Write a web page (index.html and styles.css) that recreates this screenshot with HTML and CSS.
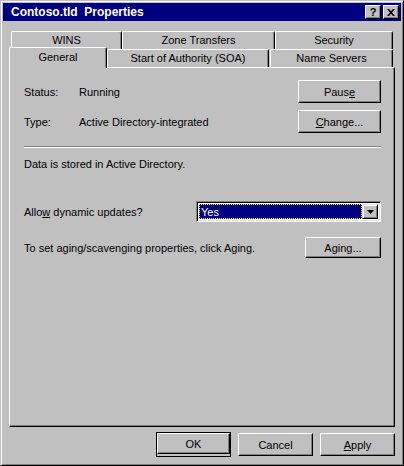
FILE: index.html
```html
<!DOCTYPE html>
<html>
<head>
<meta charset="utf-8">
<link rel="stylesheet" href="styles.css">
</head>
<body>
<div class="window">
  <div class="titlebar">
    <span class="title">Contoso.tld&nbsp; Properties</span>
    <div class="tbtns">
      <div class="tbtn">?</div>
      <div class="tbtn">
        <svg width="8" height="7" viewBox="0 0 8 7"><path d="M0 0h2l2 2.2L6 0h2L5 3.5 8 7H6L4 4.8 2 7H0l3-3.5z" fill="#000"/></svg>
      </div>
    </div>
  </div>
  <div class="client">
    <div class="tabs">
      <div class="row row1">
        <div class="tab t-wins">WINS</div>
        <div class="tab t-zone">Zone Transfers</div>
        <div class="tab t-sec">Security</div>
      </div>
      <div class="row row2">
        <div class="tab sel t-gen">General</div>
        <div class="tab t-soa">Start of Authority (SOA)</div>
        <div class="tab t-ns">Name Servers</div>
      </div>
    </div>
    <div class="panel">
      <div class="line r-status">
        <span class="lbl">Status:</span><span class="val">Running</span>
        <div class="btn b-wide">Paus<u>e</u></div>
      </div>
      <div class="line r-type">
        <span class="lbl">Type:</span><span class="val">Active Directory-integrated</span>
        <div class="btn b-wide"><u>C</u>hange...</div>
      </div>
      <div class="sep"></div>
      <div class="info">Data is stored in Active Directory.</div>
      <div class="line r-allow">
        <span class="grow">Allo<u>w</u> dynamic updates?</span>
        <div class="combo">
          <div class="field"><span class="focus">Yes</span></div>
          <div class="arrow"><svg width="7" height="4" viewBox="0 0 7 4"><path d="M0 0h7L3.5 4z" fill="#000"/></svg></div>
        </div>
      </div>
      <div class="line r-aging">
        <span class="grow">To set aging/scavenging properties, click Aging.</span>
        <div class="btn b-aging">Aging...</div>
      </div>
    </div>
    <div class="footer">
      <div class="default"><div class="btn b-foot">OK</div></div>
      <div class="btn b-foot">Cancel</div>
      <div class="btn b-foot"><u>A</u>pply</div>
    </div>
  </div>
</div>
</body>
</html>
```
FILE: styles.css
```css
html, body {
  margin: 0;
  padding: 0;
  background: #c0c0c0;
}
body {
  font-family: "Liberation Sans", Arial, sans-serif;
  font-size: 11px;
  color: #000;
}
.window {
  width: 404px;
  height: 466px;
  box-sizing: border-box;
  background: #c0c0c0;
  border-top: 1px solid #c0c0c0;
  border-left: 1px solid #c0c0c0;
  border-right: 1px solid #000;
  border-bottom: 1px solid #000;
  box-shadow: inset 1px 1px #fff, inset -1px -1px #808080;
  padding: 2px;
  display: flex;
  flex-direction: column;
}
.titlebar {
  height: 18px;
  background: #000080;
  display: flex;
  align-items: center;
  justify-content: space-between;
  padding: 0 2px 0 8px;
  flex-shrink: 0;
}
.title {
  color: #fff;
  font-weight: bold;
  font-size: 12px;
  white-space: pre;
}
.tbtns {
  display: flex;
  gap: 2px;
}
.tbtn {
  width: 16px;
  height: 14px;
  box-sizing: border-box;
  background: #c0c0c0;
  border-top: 1px solid #fff;
  border-left: 1px solid #fff;
  border-right: 1px solid #000;
  border-bottom: 1px solid #000;
  box-shadow: inset -1px -1px #808080;
  display: flex;
  align-items: center;
  justify-content: center;
  font-weight: bold;
  font-size: 11px;
  line-height: 12px;
}
.client {
  padding: 10px 6px 0 6px;
  display: flex;
  flex-direction: column;
}
.tabs {
  display: flex;
  flex-direction: column;
}
.row {
  display: flex;
}
.row1 {
  height: 18px;
  margin-left: 2px;
}
.row2 {
  height: 20px;
  margin-top: -2px;
  align-items: flex-end;
  position: relative;
}
.tab {
  box-sizing: border-box;
  background: #c0c0c0;
  border-top: 1px solid #fff;
  border-left: 1px solid #fff;
  border-right: 1px solid #000;
  border-radius: 2px 2px 0 0;
  box-shadow: inset -1px 0 #808080;
  display: flex;
  align-items: center;
  justify-content: center;
  padding-bottom: 1px;
}
.row1 .tab { height: 18px; }
.row2 .tab { height: 18px; }
.t-wins { width: 111px; }
.t-zone { width: 153px; }
.t-sec { width: 118px; }
.t-gen {
  width: 98px;
  z-index: 2;
}
.row2 .tab.sel {
  height: 21px;
  margin-bottom: -1px;
  padding-bottom: 3px;
}
.t-soa { width: 162px; margin-left: 0; }
.t-ns { width: 123px; margin-left: 1px; }
.panel {
  width: 386px;
  height: 360px;
  box-sizing: border-box;
  border-top: 1px solid #fff;
  border-left: 1px solid #fff;
  border-right: 1px solid #000;
  border-bottom: 1px solid #000;
  box-shadow: inset -1px -1px #808080;
  padding: 12px 13px 0 14px;
  display: flex;
  flex-direction: column;
}
.line {
  display: flex;
  align-items: center;
}
.lbl { width: 55px; }
.val { flex: 1; }
.grow { flex: 1; }
.r-type { margin-top: 7px; }
.sep {
  margin-top: 13px;
  height: 1px;
  background: #808080;
  border-bottom: 1px solid #fff;
}
.info {
  margin-top: 9px;
  height: 14px;
  line-height: 14px;
}
.r-allow { margin-top: 30px; }
.r-aging { margin-top: 15px; }
.btn {
  box-sizing: border-box;
  background: #c0c0c0;
  border-top: 1px solid #fff;
  border-left: 1px solid #fff;
  border-right: 1px solid #000;
  border-bottom: 1px solid #000;
  box-shadow: inset -1px -1px #808080;
  display: flex;
  align-items: center;
  justify-content: center;
}
.b-wide { width: 83px; height: 23px; }
.b-aging { width: 76px; height: 21px; }
.combo {
  width: 185px;
  height: 21px;
  box-sizing: border-box;
  border-top: 1px solid #808080;
  border-left: 1px solid #808080;
  border-right: 1px solid #fff;
  border-bottom: 1px solid #fff;
  box-shadow: inset 1px 1px #000, inset -1px -1px #dfdfdf;
  padding: 2px;
  display: flex;
  background: #fff;
}
.field {
  flex: 1;
  background: #000080;
  display: flex;
  align-items: stretch;
}
.focus {
  flex: 1;
  color: #fff;
  border: 1px dotted #ffff00;
  padding-left: 1px;
  display: flex;
  align-items: center;
}
.arrow {
  width: 16px;
  box-sizing: border-box;
  background: #c0c0c0;
  border-top: 1px solid #dfdfdf;
  border-left: 1px solid #dfdfdf;
  border-right: 1px solid #000;
  border-bottom: 1px solid #000;
  box-shadow: inset 1px 1px #fff, inset -1px -1px #808080;
  display: flex;
  align-items: center;
  justify-content: center;
}
.footer {
  display: flex;
  justify-content: flex-end;
  gap: 7px;
  margin-top: 6px;
  padding-right: 0;
}
.default {
  border: 1px solid #000;
  display: flex;
  margin: -1px 0;
}
.b-foot { width: 75px; height: 23px; }
.default .b-foot { width: 73px; height: 21px; }
u { text-decoration: underline; text-underline-offset: 1px; }
```
